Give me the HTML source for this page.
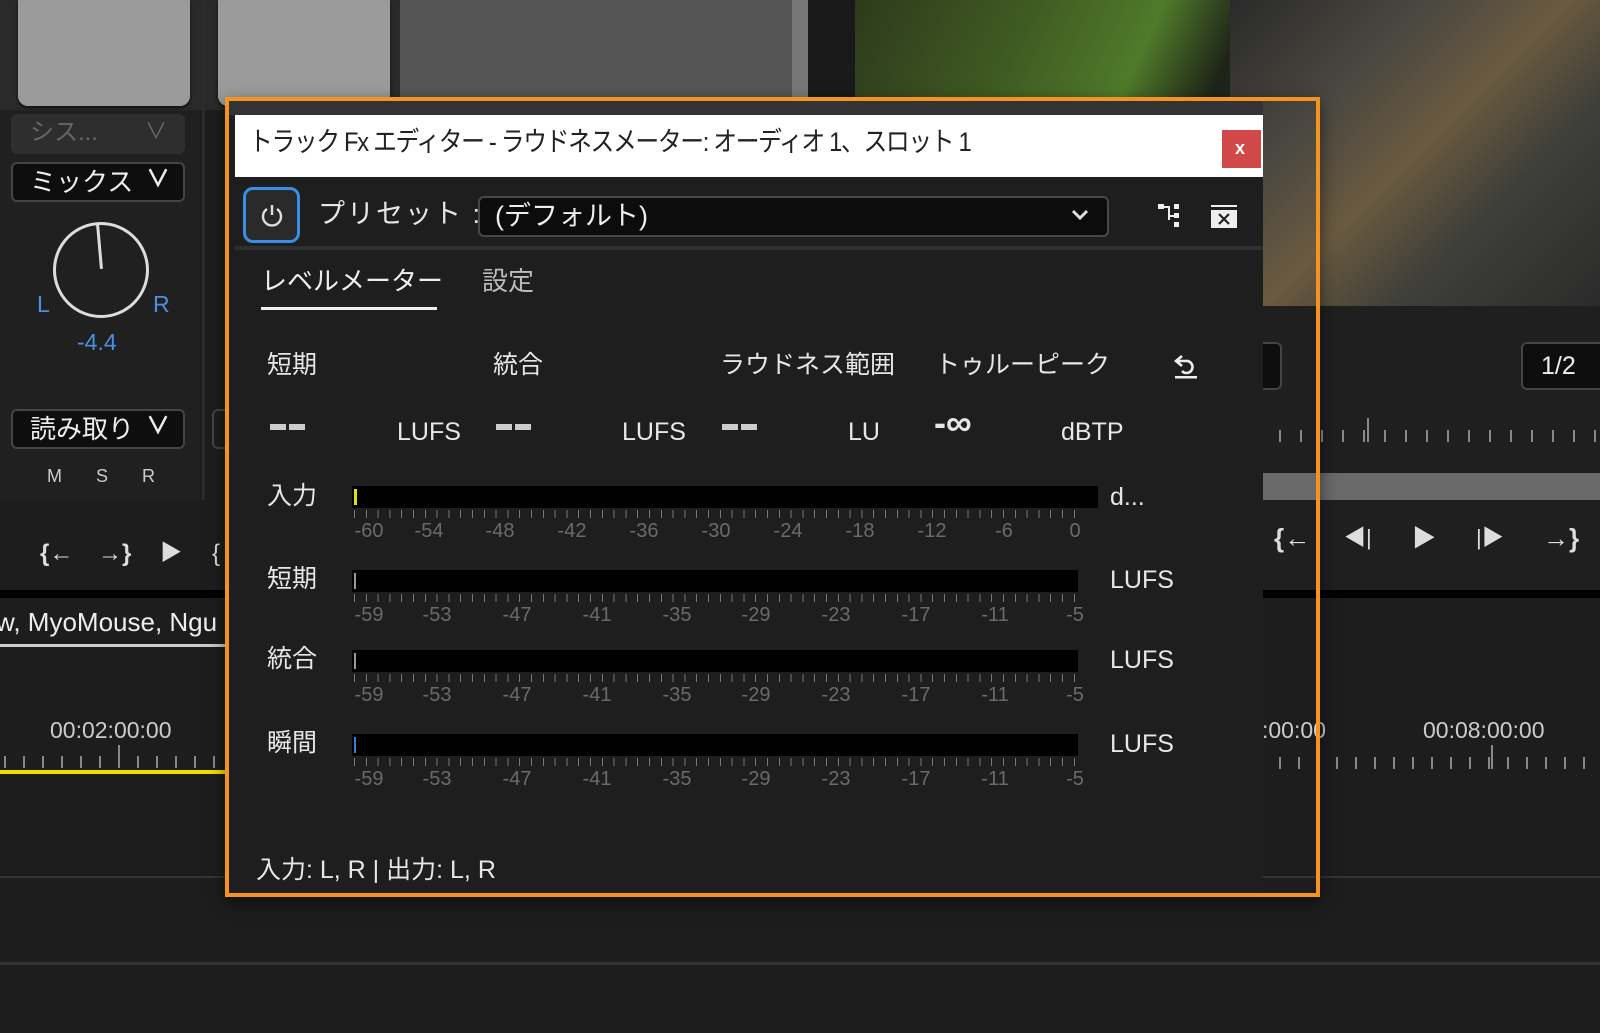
<!DOCTYPE html>
<html><head><meta charset="utf-8"><style>
*{margin:0;padding:0;box-sizing:border-box}
body{width:1600px;height:1033px;background:#1d1d1d;position:relative;overflow:hidden;font-family:"Liberation Sans","Noto Sans CJK JP",sans-serif;color:#d8d8d8}
.a{position:absolute}
.t{position:absolute;white-space:nowrap;line-height:1}
.sc{position:absolute;font-size:20px;color:#6a6a6a;line-height:1;transform:translateX(-50%)}
.bar{position:absolute;background:#000}
.tk{position:absolute;height:8px;background:repeating-linear-gradient(90deg,#777 0 1px,transparent 1px 11.8px)}
.lab{font-size:25px;color:#e6e6e6}
</style></head><body>
<!-- top-left mixer area -->
<div class="a" style="left:0;top:0;width:855px;height:110px;background:#2a2a2a"></div>
<div class="a" style="left:18px;top:0;width:172px;height:106px;background:#9b9b9b;border-radius:0 0 10px 10px;box-shadow:0 2px 3px #111"></div>
<div class="a" style="left:218px;top:0;width:172px;height:106px;background:#9b9b9b;border-radius:0 0 10px 10px;box-shadow:0 2px 3px #111"></div>
<div class="a" style="left:400px;top:0;width:392px;height:110px;background:#555"></div>
<div class="a" style="left:792px;top:0;width:16px;height:110px;background:#777"></div>
<div class="a" style="left:808px;top:0;width:47px;height:310px;background:#1a1a1a"></div>
<div class="a" style="left:202px;top:0;width:3px;height:500px;background:#2c2c2c"></div>
<div class="a" style="left:0;top:110px;width:200px;height:390px;background:#202020"></div>
<div class="a" style="left:11px;top:114px;width:174px;height:40px;background:#2e2e2e;border-radius:6px"></div>
<div class="t" style="left:30px;top:121px;font-size:24px;color:#666">シス...</div>
<div class="t" style="left:145px;top:121px;font-size:22px;color:#666">&#x2228;</div>
<div class="a" style="left:11px;top:162px;width:174px;height:40px;background:#0e0e0e;border:2px solid #444;border-radius:6px"></div>
<div class="t" style="left:30px;top:169px;font-size:26px;color:#eee">ミックス</div>
<div class="t" style="left:146px;top:168px;font-size:24px;color:#eee;font-weight:bold">&#x2228;</div>
<div class="a" style="left:53px;top:222px;width:96px;height:96px;border:3px solid #ddd;border-radius:50%"></div>
<div class="a" style="left:98px;top:224px;width:3px;height:45px;background:#ddd;transform:rotate(-5deg)"></div>
<div class="t" style="left:37px;top:293px;font-size:23px;color:#4a90e0">L</div>
<div class="t" style="left:153px;top:293px;font-size:23px;color:#4a90e0">R</div>
<div class="t" style="left:77px;top:331px;font-size:23px;color:#4a90e0">-4.4</div>
<div class="a" style="left:11px;top:409px;width:174px;height:40px;background:#0e0e0e;border:2px solid #444;border-radius:6px"></div>
<div class="t" style="left:30px;top:416px;font-size:26px;color:#eee">読み取り</div>
<div class="t" style="left:146px;top:415px;font-size:24px;color:#eee;font-weight:bold">&#x2228;</div>
<div class="a" style="left:212px;top:409px;width:20px;height:40px;border:2px solid #444;border-radius:6px 0 0 6px"></div>
<div class="t" style="left:47px;top:467px;font-size:18px;color:#ccc">M</div>
<div class="t" style="left:96px;top:467px;font-size:18px;color:#ccc">S</div>
<div class="t" style="left:142px;top:467px;font-size:18px;color:#ccc">R</div>
<div class="t" style="left:40px;top:542px;font-size:24px;color:#ddd;font-weight:bold">{&#x2190;</div>
<div class="t" style="left:98px;top:542px;font-size:24px;color:#ddd;font-weight:bold">&#x2192;}</div>
<div class="t" style="left:160px;top:542px;font-size:22px;color:#ddd">&#x25B6;</div>
<div class="t" style="left:212px;top:542px;font-size:24px;color:#ddd">{</div>
<div class="a" style="left:0;top:590px;width:232px;height:8px;background:#000"></div>
<div class="t" style="left:-4px;top:609px;font-size:26px;color:#eee">w, MyoMouse, Ngu</div>
<div class="a" style="left:0;top:644px;width:232px;height:3px;background:#ccc"></div>
<div class="t" style="left:50px;top:719px;font-size:23px;color:#ccc">00:02:00:00</div>
<div class="a" style="left:0;top:756px;width:232px;height:12px;background:repeating-linear-gradient(90deg,transparent 0 4px,#888 4px 6px,transparent 6px 19px)"></div>
<div class="a" style="left:118px;top:745px;width:2px;height:23px;background:#888"></div>
<div class="a" style="left:0;top:770px;width:232px;height:4px;background:#f0e000"></div>
<!-- video image -->
<div class="a" style="left:855px;top:0;width:745px;height:306px;background:linear-gradient(115deg,#2e3a1c 0%,#3f5a22 20%,#4f7a2a 35%,#1e2418 45%,#222 55%,#3b3a36 70%,#5a4a38 80%,#3a3a36 90%,#2a2a2a 100%)"></div>
<div class="a" style="left:1230px;top:0;width:370px;height:306px;background:linear-gradient(135deg,#2a2a2a 0%,#4a4840 30%,#6a5a40 50%,#3e3e3a 70%,#2b2b2b 100%)"></div>
<!-- right preview controls -->
<div class="a" style="left:1263px;top:306px;width:337px;height:285px;background:#1f1f1f"></div>
<div class="a" style="left:1240px;top:342px;width:42px;height:48px;border:2px solid #444;border-left:none;border-radius:0 6px 6px 0;background:#0e0e0e"></div>
<div class="a" style="left:1521px;top:342px;width:90px;height:48px;border:2px solid #444;border-radius:6px;background:#0e0e0e"></div>
<div class="t" style="left:1541px;top:354px;font-size:25px;color:#eee">1/2</div>
<div class="a" style="left:1263px;top:430px;width:337px;height:12px;background:repeating-linear-gradient(90deg,transparent 0 16px,#888 16px 18px,transparent 18px 21px)"></div>
<div class="a" style="left:1367px;top:418px;width:2px;height:24px;background:#888"></div>
<div class="a" style="left:1263px;top:473px;width:337px;height:27px;background:#6a6a6a"></div>
<div class="t" style="left:1274px;top:525px;font-size:26px;color:#ddd;font-weight:bold">{&#x2190;</div>
<div class="t" style="left:1344px;top:527px;font-size:22px;color:#ddd">&#x25C0;|</div>
<div class="t" style="left:1412px;top:527px;font-size:24px;color:#ddd">&#x25B6;</div>
<div class="t" style="left:1476px;top:527px;font-size:22px;color:#ddd">|&#x25B6;</div>
<div class="t" style="left:1543px;top:525px;font-size:26px;color:#ddd;font-weight:bold">&#x2192;}</div>
<div class="a" style="left:1263px;top:590px;width:337px;height:8px;background:#000"></div>
<div class="t" style="left:1262px;top:719px;font-size:23px;color:#ccc">:00:00</div>
<div class="t" style="left:1423px;top:719px;font-size:23px;color:#ccc">00:08:00:00</div>
<div class="a" style="left:1263px;top:757px;width:337px;height:12px;background:repeating-linear-gradient(90deg,transparent 0 16px,#888 16px 18px,transparent 18px 19px)"></div>
<div class="a" style="left:1491px;top:745px;width:2px;height:24px;background:#888"></div>
<div class="a" style="left:0;top:876px;width:1600px;height:2px;background:#333"></div>
<div class="a" style="left:0;top:962px;width:1600px;height:3px;background:#333"></div>
<!-- dialog -->
<div class="a" style="left:225px;top:97px;width:1095px;height:800px;border:4px solid #f49322;background:transparent;box-shadow:0 6px 16px rgba(0,0,0,.5)"></div>
<div class="a" style="left:229px;top:101px;width:1034px;height:792px;background:#1e1e1e"></div>
<div class="a" style="left:229px;top:101px;width:1034px;height:14px;background:#333"></div>
<div class="a" style="left:235px;top:115px;width:1028px;height:62px;background:#fff"></div>
<div class="t" style="left:249px;top:129px;font-size:27px;color:#222;letter-spacing:-1.5px;transform:scaleX(.88);transform-origin:left">トラック Fx エディター - ラウドネスメーター: オーディオ 1、スロット 1</div>
<div class="a" style="left:1222px;top:130px;width:39px;height:38px;background:#d04848"></div>
<div class="t" style="left:1235px;top:139px;font-size:18px;color:#fff;font-weight:bold">x</div>
<div class="a" style="left:243px;top:187px;width:57px;height:56px;border:3px solid #3a8ee6;border-radius:10px;background:#2a2a2a"></div>
<svg class="a" style="left:258px;top:201px" width="28" height="28" viewBox="0 0 28 28"><path d="M9 8 A9 9 0 1 0 19 8" fill="none" stroke="#ddd" stroke-width="2.4"/><line x1="14" y1="4" x2="14" y2="14" stroke="#ddd" stroke-width="2.4"/></svg>
<div class="t" style="left:318px;top:201px;font-size:27px;color:#e6e6e6;letter-spacing:2px">プリセット :</div>
<div class="a" style="left:478px;top:196px;width:631px;height:41px;background:#0c0c0c;border:2px solid #474747;border-radius:6px"></div>
<div class="t" style="left:495px;top:203px;font-size:27px;color:#eee">(デフォルト)</div>
<svg class="a" style="left:1070px;top:207px" width="20" height="16" viewBox="0 0 20 16"><path d="M3 4 L10 11 L17 4" fill="none" stroke="#ddd" stroke-width="3"/></svg>
<svg class="a" style="left:1157px;top:202px" width="30" height="28" viewBox="0 0 30 28"><rect x="1" y="2" width="6" height="5" fill="#eee"/><path d="M6 5 H12 V18" fill="none" stroke="#eee" stroke-width="2"/><rect x="17" y="2" width="5" height="5" fill="#eee"/><rect x="17" y="11" width="5" height="5" fill="#eee"/><rect x="17" y="20" width="5" height="5" fill="#eee"/><path d="M12 14 H17" stroke="#eee" stroke-width="2"/></svg>
<svg class="a" style="left:1210px;top:204px" width="28" height="26" viewBox="0 0 28 26"><rect x="1" y="1" width="26" height="2" fill="#eee"/><rect x="1" y="6" width="26" height="18" fill="#eee"/><path d="M9 10 L19 20 M19 10 L9 20" stroke="#222" stroke-width="2.2"/></svg>
<div class="a" style="left:235px;top:246px;width:1028px;height:4px;background:#2f2f2f"></div>
<div class="t" style="left:261px;top:268px;font-size:26px;color:#eee">レベルメーター</div>
<div class="a" style="left:261px;top:307px;width:176px;height:3px;background:#eee"></div>
<div class="t" style="left:482px;top:268px;font-size:26px;color:#bbb">設定</div>
<div class="t lab" style="left:267px;top:353px">短期</div>
<div class="t lab" style="left:493px;top:353px">統合</div>
<div class="t lab" style="left:720px;top:353px">ラウドネス範囲</div>
<div class="t lab" style="left:935px;top:353px">トゥルーピーク</div>
<svg class="a" style="left:1170px;top:349px" width="32" height="32" viewBox="0 0 32 32"><path d="M12 7 L6 12 L12 17" fill="none" stroke="#eee" stroke-width="2.6"/><path d="M6 12 H16 A6 6 0 1 1 12 22" fill="none" stroke="#eee" stroke-width="2.6"/><rect x="5" y="27" width="22" height="2.5" fill="#eee"/></svg>
<div class="a" style="left:270px;top:424px;width:16px;height:6px;background:#ccc"></div><div class="a" style="left:289px;top:424px;width:16px;height:6px;background:#ccc"></div>
<div class="a" style="left:496px;top:424px;width:16px;height:6px;background:#ccc"></div><div class="a" style="left:515px;top:424px;width:16px;height:6px;background:#ccc"></div>
<div class="a" style="left:722px;top:424px;width:16px;height:6px;background:#ccc"></div><div class="a" style="left:741px;top:424px;width:16px;height:6px;background:#ccc"></div>
<div class="t" style="left:397px;top:420px;font-size:25px;color:#e6e6e6">LUFS</div>
<div class="t" style="left:622px;top:420px;font-size:25px;color:#e6e6e6">LUFS</div>
<div class="t" style="left:848px;top:420px;font-size:25px;color:#e6e6e6">LU</div>
<div class="t" style="left:934px;top:405px;font-size:36px;color:#e6e6e6;font-weight:bold">-∞</div>
<div class="t" style="left:1061px;top:420px;font-size:25px;color:#e6e6e6">dBTP</div>
<!-- meters -->
<div class="t lab" style="left:267px;top:484px">入力</div>
<div class="bar" style="left:352px;top:486px;width:746px;height:22px"></div>
<div class="a" style="left:354px;top:489px;width:3px;height:16px;background:#e6e000"></div>
<div class="tk" style="left:354px;top:510px;width:728px"></div>
<div class="t" style="left:1110px;top:485px;font-size:25px;color:#e6e6e6">d...</div>
<div class="t lab" style="left:267px;top:567px">短期</div>
<div class="bar" style="left:352px;top:570px;width:726px;height:22px"></div>
<div class="a" style="left:354px;top:573px;width:2px;height:16px;background:#999"></div>
<div class="tk" style="left:354px;top:594px;width:728px"></div>
<div class="t" style="left:1110px;top:568px;font-size:25px;color:#e6e6e6">LUFS</div>
<div class="t lab" style="left:267px;top:647px">統合</div>
<div class="bar" style="left:352px;top:650px;width:726px;height:22px"></div>
<div class="a" style="left:354px;top:653px;width:2px;height:16px;background:#999"></div>
<div class="tk" style="left:354px;top:674px;width:728px"></div>
<div class="t" style="left:1110px;top:648px;font-size:25px;color:#e6e6e6">LUFS</div>
<div class="t lab" style="left:267px;top:731px">瞬間</div>
<div class="bar" style="left:352px;top:734px;width:726px;height:22px"></div>
<div class="a" style="left:354px;top:737px;width:2px;height:16px;background:#3a7ae0"></div>
<div class="tk" style="left:354px;top:758px;width:728px"></div>
<div class="t" style="left:1110px;top:732px;font-size:25px;color:#e6e6e6">LUFS</div>
<div class="sc" style="left:369px;top:521px">-60</div><div class="sc" style="left:429px;top:521px">-54</div><div class="sc" style="left:500px;top:521px">-48</div><div class="sc" style="left:572px;top:521px">-42</div><div class="sc" style="left:644px;top:521px">-36</div><div class="sc" style="left:716px;top:521px">-30</div><div class="sc" style="left:788px;top:521px">-24</div><div class="sc" style="left:860px;top:521px">-18</div><div class="sc" style="left:932px;top:521px">-12</div><div class="sc" style="left:1004px;top:521px">-6</div><div class="sc" style="left:1075px;top:521px">0</div>
<div class="sc" style="left:369px;top:605px">-59</div><div class="sc" style="left:437px;top:605px">-53</div><div class="sc" style="left:517px;top:605px">-47</div><div class="sc" style="left:597px;top:605px">-41</div><div class="sc" style="left:677px;top:605px">-35</div><div class="sc" style="left:756px;top:605px">-29</div><div class="sc" style="left:836px;top:605px">-23</div><div class="sc" style="left:916px;top:605px">-17</div><div class="sc" style="left:995px;top:605px">-11</div><div class="sc" style="left:1075px;top:605px">-5</div>
<div class="sc" style="left:369px;top:685px">-59</div><div class="sc" style="left:437px;top:685px">-53</div><div class="sc" style="left:517px;top:685px">-47</div><div class="sc" style="left:597px;top:685px">-41</div><div class="sc" style="left:677px;top:685px">-35</div><div class="sc" style="left:756px;top:685px">-29</div><div class="sc" style="left:836px;top:685px">-23</div><div class="sc" style="left:916px;top:685px">-17</div><div class="sc" style="left:995px;top:685px">-11</div><div class="sc" style="left:1075px;top:685px">-5</div>
<div class="sc" style="left:369px;top:769px">-59</div><div class="sc" style="left:437px;top:769px">-53</div><div class="sc" style="left:517px;top:769px">-47</div><div class="sc" style="left:597px;top:769px">-41</div><div class="sc" style="left:677px;top:769px">-35</div><div class="sc" style="left:756px;top:769px">-29</div><div class="sc" style="left:836px;top:769px">-23</div><div class="sc" style="left:916px;top:769px">-17</div><div class="sc" style="left:995px;top:769px">-11</div><div class="sc" style="left:1075px;top:769px">-5</div>
<div class="t" style="left:256px;top:858px;font-size:25px;color:#e6e6e6">入力: L, R | 出力: L, R</div>
</body></html>
